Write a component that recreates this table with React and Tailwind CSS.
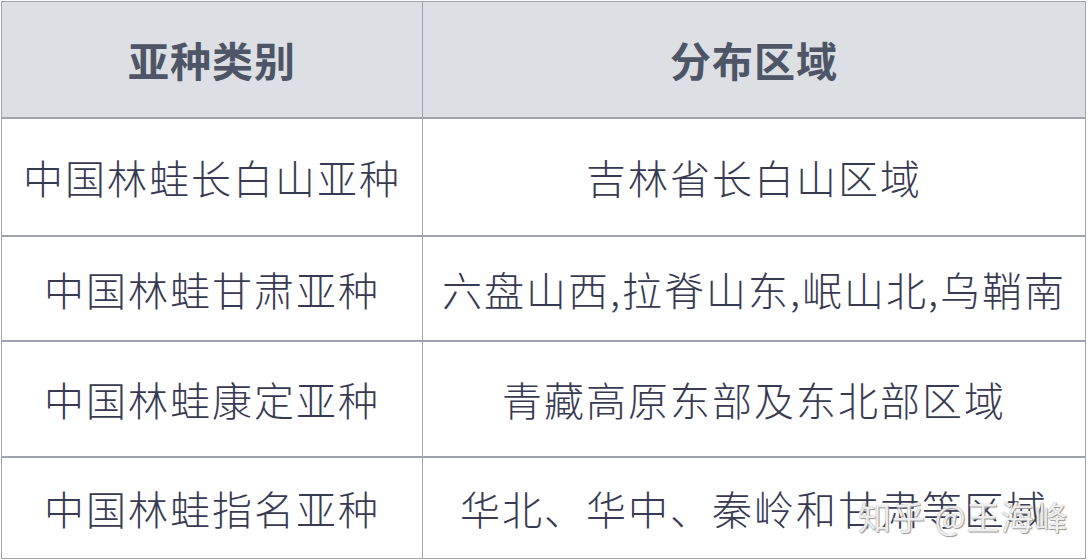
const rows = [
  { name: "中国林蛙长白山亚种", area: "吉林省长白山区域", h: "h-[118px]" },
  { name: "中国林蛙甘肃亚种", area: "六盘山西,拉脊山东,岷山北,乌鞘南", h: "h-[105px]" },
  { name: "中国林蛙康定亚种", area: "青藏高原东部及东北部区域", h: "h-[116px]" },
  { name: "中国林蛙指名亚种", area: "华北、华中、秦岭和甘肃等区域", h: "h-[100px]" },
];

export default function App() {
  return (
    <div
      className="relative w-[1088px] h-[560px] bg-white pl-[1px] pt-[1px] overflow-hidden"
      style={{ fontFamily: '"Noto Sans CJK SC", "Noto Sans", sans-serif' }}
    >
      <div className="w-[1085px] border border-[#a0a2ad]">
        {/* Header */}
        <div className="flex h-[117px] bg-[#dcdfe3] border-b-2 border-[#a0a2ad] text-[41px] font-bold text-[#4d5566] tracking-[1px]">
          <div className="w-[421px] flex items-center justify-center border-r border-[#a0a2ad]">
            亚种类别
          </div>
          <div className="flex-1 flex items-center justify-center">分布区域</div>
        </div>

        {/* Body */}
        {rows.map((r, i) => (
          <div
            key={r.name}
            className={`flex ${r.h} ${i < rows.length - 1 ? "border-b-2 border-[#a0a2ad]" : ""} text-[40px] font-light text-[#383a52] tracking-[2px]`}
          >
            <div className="w-[421px] flex items-center justify-center border-r border-[#a0a2ad]">
              {r.name}
            </div>
            <div className="flex-1 flex items-center justify-center whitespace-nowrap">
              {r.area}
            </div>
          </div>
        ))}
      </div>

      {/* Watermark */}
      <div className="absolute left-[858px] top-[492px] text-[33px] text-white/85 tracking-[1px] [text-shadow:0_0_1px_#888,1px_1px_1px_#999]">
        知乎 @王海峰
      </div>
    </div>
  );
}
